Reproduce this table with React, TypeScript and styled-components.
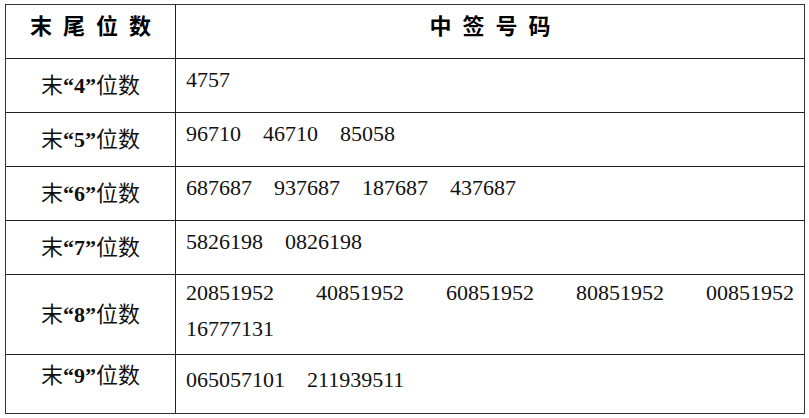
import React from 'react';
import styled, { createGlobalStyle } from 'styled-components';

const GlobalStyle = createGlobalStyle`
  html, body {
    margin: 0;
    padding: 0;
    background: #ffffff;
  }
  body {
    font-family: "Liberation Serif", "Noto Sans CJK SC", serif;
    color: #111111;
  }
  * {
    box-sizing: border-box;
  }
`;

const Page = styled.div`
  padding: 4px 0 0 5px;
`;

const Table = styled.div`
  width: 800px;
  display: grid;
  grid-template-columns: 170px 1fr;
  border: 1px solid #333333;
`;

const HeadCell = styled.div<{ $divider?: boolean }>`
  height: 54px;
  display: flex;
  align-items: center;
  justify-content: center;
  padding-bottom: 15px;
  border-bottom: 1px solid #222222;
  border-right: ${p => (p.$divider ? '1px solid #222222' : 'none')};
`;

const HeadWord = styled.div`
  display: flex;
  gap: 11px;
  font-family: "Noto Sans CJK SC", sans-serif;
  font-size: 22px;
  font-weight: 700;
  line-height: 22px;
  color: #000000;
`;

const LabelCell = styled.div<{ $h: number; $last?: boolean; $lift?: number }>`
  height: ${p => p.$h}px;
  display: flex;
  align-items: center;
  justify-content: center;
  padding-bottom: ${p => p.$lift ?? 0}px;
  border-right: 1px solid #222222;
  border-bottom: ${p => (p.$last ? 'none' : '1px solid #222222')};
  font-family: "Liberation Serif", "Noto Sans CJK SC", serif;
  font-size: 22px;
  line-height: 26px;
  white-space: nowrap;

  b {
    font-weight: 700;
  }
`;

const CodeCell = styled.div<{ $h: number; $last?: boolean; $top: number }>`
  height: ${p => p.$h}px;
  padding: ${p => p.$top}px 10px 0 10px;
  border-bottom: ${p => (p.$last ? 'none' : '1px solid #222222')};
  font-family: "Liberation Serif", serif;
  font-size: 22px;
  line-height: 36px;
`;

const CodeLine = styled.div<{ $spread?: boolean }>`
  display: flex;
  gap: 22px;
  justify-content: ${p => (p.$spread ? 'space-between' : 'flex-start')};
`;

type Row = {
  digit: string;
  lines: { codes: string[]; spread?: boolean }[];
  h: number;
  top: number;
  lift?: number;
};

const rows: Row[] = [
  { digit: '4', lines: [{ codes: ['4757'] }], h: 54, top: 3 },
  { digit: '5', lines: [{ codes: ['96710', '46710', '85058'] }], h: 54, top: 3 },
  { digit: '6', lines: [{ codes: ['687687', '937687', '187687', '437687'] }], h: 54, top: 3 },
  { digit: '7', lines: [{ codes: ['5826198', '0826198'] }], h: 54, top: 3 },
  {
    digit: '8',
    lines: [
      { codes: ['20851952', '40851952', '60851952', '80851952', '00851952'], spread: true },
      { codes: ['16777131'] },
    ],
    h: 80,
    top: 0,
  },
  { digit: '9', lines: [{ codes: ['065057101', '211939511'] }], h: 58, top: 7, lift: 16 },
];

const headLeft = ['末', '尾', '位', '数'];
const headRight = ['中', '签', '号', '码'];

export default function App() {
  return (
    <Page>
      <GlobalStyle />
      <Table>
        <HeadCell $divider>
          <HeadWord>
            {headLeft.map(c => (
              <span key={c}>{c}</span>
            ))}
          </HeadWord>
        </HeadCell>
        <HeadCell>
          <HeadWord>
            {headRight.map(c => (
              <span key={c}>{c}</span>
            ))}
          </HeadWord>
        </HeadCell>

        {rows.map((row, i) => {
          const last = i === rows.length - 1;
          return (
            <React.Fragment key={row.digit}>
              <LabelCell $h={row.h} $last={last} $lift={row.lift}>
                末<b>“{row.digit}”</b>位数
              </LabelCell>
              <CodeCell $h={row.h} $last={last} $top={row.top}>
                {row.lines.map((line, j) => (
                  <CodeLine key={j} $spread={line.spread}>
                    {line.codes.map(code => (
                      <span key={code}>{code}</span>
                    ))}
                  </CodeLine>
                ))}
              </CodeCell>
            </React.Fragment>
          );
        })}
      </Table>
    </Page>
  );
}
